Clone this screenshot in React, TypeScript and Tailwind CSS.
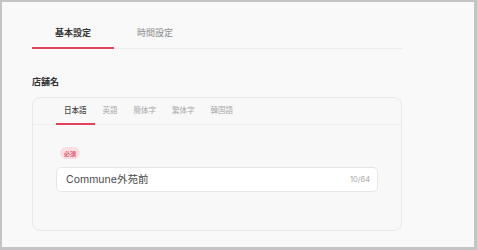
import React from "react";

export default function App() {
  const ff = { fontFamily: '"Inter", "Noto Sans CJK JP", sans-serif' };
  const langs = ["日本語", "英語", "簡体字", "繁体字", "韓国語"];
  return (
    <div
      style={ff}
      className="box-border w-[477px] h-[250px] overflow-hidden bg-[#f9f9f9] border-l-2 border-t-2 border-r-[3px] border-b-[3px] border-[#c4c4c4] pl-[30px]"
    >
      <div className="mt-[17px] flex w-[370px] border-b border-[#ececec]">
        <div className="w-[82px] h-[28px] -mb-px border-b-2 border-[#e4435c] box-content flex items-center justify-center text-[9px] font-bold text-[#333]">
          基本設定
        </div>
        <div className="w-[82px] h-[28px] -mb-px border-b-2 border-transparent box-content flex items-center justify-center text-[9px] text-[#8a8a8a]">
          時間設定
        </div>
      </div>
      <div className="mt-[26px] h-[14px] leading-[14px] text-[9px] font-bold text-[#333]">店舗名</div>
      <div className="mt-[8px] w-[370px] h-[134px] box-border rounded-[8px] border border-[#e9e9e9] bg-[#f8f8f8]">
        <div className="flex border-b border-[#ececec] pl-[23px]">
          {langs.map((l, i) => (
            <div
              key={l}
              className={
                i === 0
                  ? "h-[25px] -mb-px px-2 border-b-2 border-[#e4435c] box-content flex items-center text-[7.5px] font-medium text-[#444]"
                  : "h-[25px] -mb-px px-2 border-b-2 border-transparent box-content flex items-center text-[7.5px] text-[#a8a8a8]"
              }
            >
              {l}
            </div>
          ))}
        </div>
        <div className="px-[23px]">
          <div className="mt-[22px] ml-[4px] w-[20px] h-[12px] rounded-full bg-[#fcdde2] text-[#e0405a] text-[6px] font-medium flex items-center justify-center">
            必須
          </div>
          <div className="mt-[8px] h-[25px] box-border rounded-[5px] border border-[#e6e6e6] bg-white flex items-center justify-between pl-[9px] pr-[7px]">
            <span className="text-[10.5px] text-[#4a4a4a]">Commune外苑前</span>
            <span className="text-[7.5px] text-[#a9a9a9]">10/64</span>
          </div>
        </div>
      </div>
    </div>
  );
}
